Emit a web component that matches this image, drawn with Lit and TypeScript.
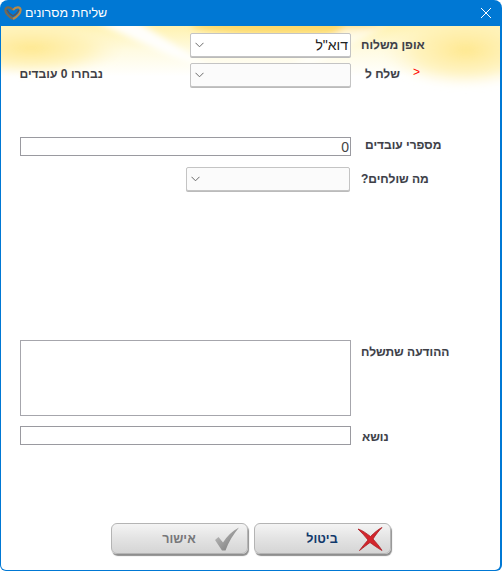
import { LitElement, html, css, svg } from "lit";
import { customElement } from "lit/decorators.js";

const chevron = svg`<svg class="chev" width="9" height="6" viewBox="0 0 9 6"><path d="M0.5 0.8 L4.5 4.8 L8.5 0.8" fill="none" stroke="#6a6a6a" stroke-width="1"/></svg>`;

@customElement("app-root")
export class AppRoot extends LitElement {
  static styles = css`
    :host { display: block; width: 502px; height: 571px; background: #fff; font-family: "Liberation Sans", Arial, sans-serif; }
    * { box-sizing: border-box; }
    .win { width: 502px; height: 571px; display: flex; flex-direction: column; background: #0078d4; border-radius: 8px 8px 6px 6px; padding: 0 2px 1px 1px; overflow: hidden; }
    .title { height: 26px; flex: none; display: flex; align-items: center; color: #fff; padding: 0 9px 0 3px; }
    .logo { flex: none; }
    .ttext { font-size: 12.5px; margin-left: 3px; margin-right: auto; direction: rtl; white-space: nowrap; flex: none; }
    .body { flex: 1; position: relative; background: #fff; border-radius: 0 0 5px 5px; overflow: hidden; }
    .glow { position: absolute; left: 0; top: 0; width: 100%; height: 70px; }
    .form { position: relative; display: flex; flex-direction: column; padding-left: 19px; height: 100%; }
    .row { display: flex; align-items: flex-start; }
    .lab { font-size: 12px; font-weight: 700; color: #3f3f46; direction: rtl; white-space: nowrap; text-shadow: 0 0 1px rgba(120,160,220,.25); }
    .sel { height: 24px; border: 1px solid #c4c4c4; border-radius: 2px; background: #fff; display: flex; align-items: center; padding: 0 2px 0 4px; flex: none; box-shadow: 0 1px 0 #bbb; }
    .sel.dim { background: #fbfbfb; }
    .val { flex: 1; text-align: right; direction: rtl; font-size: 14px; color: #222; }
    .w161 { width: 161px; }
    .w164 { width: 164px; }
    .inp { width: 331px; height: 19px; border: 1px solid #9a9aa0; background: #fff; flex: none; font-size: 14px; color: #444; text-align: right; padding-right: 1px; line-height: 18px; }
    .area { width: 331px; height: 76px; border: 1px solid #a6a6ac; background: #fff; flex: none; }
    .r1 { margin-top: 7px; }
    .r2 { margin-top: 6px; }
    .r3 { margin-top: 50px; }
    .r4 { margin-top: 11px; }
    .r5 { margin-top: 149px; }
    .r6 { margin-top: 10px; }
    .r7 { margin-top: 78px; margin-left: 91px; gap: 6px; }
    .left { font-size: 12.1px; font-weight: 700; color: #3f3f46; padding-top: 4px; }
    .left span { direction: rtl; display: block; width: 83px; white-space: nowrap; }
    .l1 { margin-left: 10px; padding-top: 5px; }
    .req { color: #f00; font-size: 12px; font-weight: 400; margin-left: 13px; line-height: 11px; padding-top: 4px; }
    .l2 { margin-left: 14px; padding-top: 4px; }
    .l3 { margin-left: 14px; padding-top: 1px; }
    .l4 { margin-left: 11px; padding-top: 5px; }
    .l5 { margin-left: 10px; padding-top: 5px; }
    .l6 { margin-left: 11px; padding-top: 4px; }
    .pad166 { width: 166px; flex: none; }
    .pad170 { width: 170px; flex: none; }
    .btn { width: 137px; height: 31px; border: 1px solid #b4b4b4; border-radius: 6px; background: linear-gradient(#f4f4f4, #e3e3e3 50%, #d5d5d5); box-shadow: 1px 2px 1px #8e8e8e; display: flex; align-items: center; justify-content: space-between; padding: 0 7px 0 0; font-size: 12.5px; font-weight: 700; flex: none; }
    .btn .t { direction: rtl; width: 60px; text-align: center; margin-left: 37px; }
    .ok .t { color: #77777a; }
    .no .t { color: #10386b; }
  `;

  render() {
    return html`<div class="win">
      <div class="title">
        <svg class="logo" width="18" height="16" viewBox="0 0 18 16">
          <path d="M9 14 C4 11 1 8 1.5 4.5 C2 1.5 6 1.5 9 5" fill="none" stroke="#7a6a50" stroke-width="2.2"/>
          <path d="M9 14 C14 11 17 8 16.5 4.5 C16 1.5 12 1.5 9 5" fill="none" stroke="#b98a48" stroke-width="2.2"/>
          <path d="M3 5 C5 9 7 10 9 11 C11 10 13 9 15 5" fill="none" stroke="#55555c" stroke-width="1.4"/>
        </svg>
        <div class="ttext">שליחת מסרונים</div>
        <svg width="10" height="10" viewBox="0 0 10 10"><path d="M0 0 L10 10 M10 0 L0 10" stroke="#fff" stroke-width="1"/></svg>
      </div>
      <div class="body">
        <svg class="glow" viewBox="0 0 499 70" preserveAspectRatio="none">
          <defs>
            <linearGradient id="fade" x1="0" y1="0" x2="0" y2="1"><stop offset="0" stop-color="#fff2b0"/><stop offset=".35" stop-color="#fffbe2"/><stop offset=".72" stop-color="#fff"/></linearGradient>
            <radialGradient id="a"><stop offset="0" stop-color="#fee88f"/><stop offset=".6" stop-color="#fff1b5" stop-opacity=".8"/><stop offset="1" stop-color="#fff6cf" stop-opacity="0"/></radialGradient>
            <filter id="b"><feGaussianBlur stdDeviation="3"/></filter>
          </defs>
          <rect width="499" height="70" fill="url(#fade)"/>
          <g filter="url(#b)">
            <ellipse cx="30" cy="22" rx="95" ry="28" fill="url(#a)"/>
            <ellipse cx="465" cy="24" rx="85" ry="38" fill="url(#a)"/>
            <ellipse cx="285" cy="0" rx="95" ry="8" fill="#fdd96a"/>
            <path d="M92 -5 L170 30 L215 45 L135 -5Z" fill="#fff" opacity=".95"/>
            <path d="M345 0 L290 40 L310 40 L385 0Z" fill="#fff" opacity=".6"/>
          </g>
        </svg>
        <div class="form">
          <div class="row r1">
            <div class="pad170"></div>
            <div class="sel w161">${chevron}<span class="val">דוא"ל</span></div>
            <div class="lab l1">אופן משלוח</div>
          </div>
          <div class="row r2">
            <div class="left pad170"><span>נבחרו 0 עובדים</span></div>
            <div class="sel w161 dim">${chevron}</div>
            <div class="lab l2">שלח ל</div>
            <div class="req">&gt;</div>
          </div>
          <div class="row r3">
            <div class="inp">0</div>
            <div class="lab l3">מספרי עובדים</div>
          </div>
          <div class="row r4">
            <div class="pad166"></div>
            <div class="sel w164 dim">${chevron}</div>
            <div class="lab l4">מה שולחים?</div>
          </div>
          <div class="row r5">
            <div class="area"></div>
            <div class="lab l5">ההודעה שתשלח</div>
          </div>
          <div class="row r6">
            <div class="inp"></div>
            <div class="lab l6">נושא</div>
          </div>
          <div class="row r7">
            <div class="btn ok">
              <span class="t">אישור</span>
              <svg width="26" height="24" viewBox="0 0 26 24"><defs><linearGradient id="g" x1="0" y1="0" x2="1" y2="1"><stop offset="0" stop-color="#c4c4c4"/><stop offset="1" stop-color="#737373"/></linearGradient></defs><path d="M1 13 L4.5 10 L9 15.5 C13 9 18 4 25 0.5 C19.5 7 14.5 15 11.5 23.5 L8 23.5 Z" fill="url(#g)"/></svg>
            </div>
            <div class="btn no">
              <span class="t">ביטול</span>
              <svg width="26" height="24" viewBox="0 0 26 24"><path d="M1 2 C6 3.5 10 7 13.5 9.5 C17 6 21 2.5 25 0.5 C22 3.5 18.5 8 16 12 C19.5 16 22.5 19.5 25 23.5 C20.5 21 16.5 18 13 15.5 C9.5 18 6.5 20.5 2.5 23.5 C5 20 8 16.5 11 13 C8 9 4.5 5.5 1 2Z" fill="#d4252c" stroke="#a81c22" stroke-width=".8"/></svg>
            </div>
          </div>
        </div>
      </div>
    </div>`;
  }
}
